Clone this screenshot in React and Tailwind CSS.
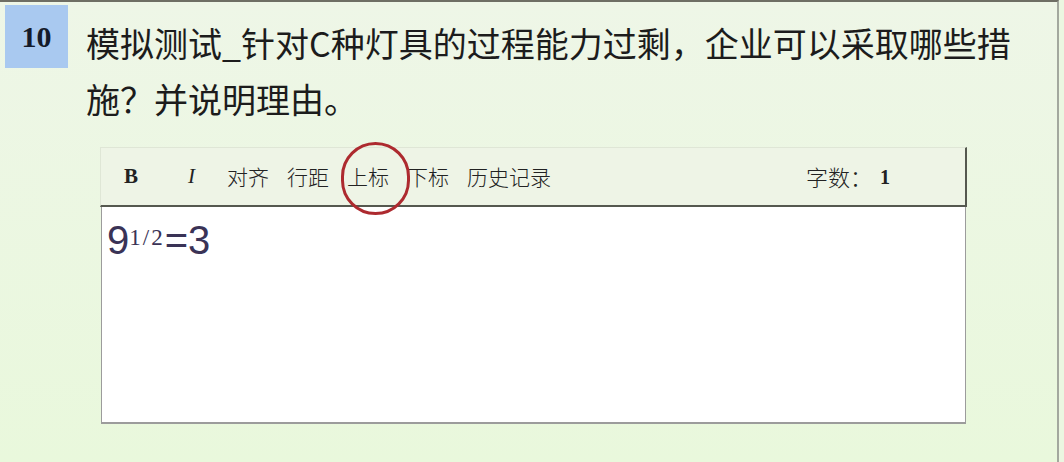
export default function App() {
  const tools = ['对齐', '行距', '上标', '下标', '历史记录'];

  return (
    <div className="w-[1064px] h-[462px] bg-[#ebf6e1] overflow-hidden">
      <div className="w-[1059px] h-[462px] border-t-2 border-t-[#6e6e64] border-r-2 border-r-[#a3a89e] bg-gradient-to-b from-[#eef6e7] to-[#e9f8dc]">
        {/* question header */}
        <div className="flex items-start">
          <div className="ml-[5px] mt-[3px] w-[63px] h-[63px] bg-[#a9c9f0] flex items-center justify-center text-[30px] font-bold text-[#141a2a]" style={{ fontFamily: '"Liberation Serif", serif' }}>
            10
          </div>
          <div className="ml-[18px] mt-[13px] text-[34px] leading-[56px] text-[#1c1c1c]" style={{ fontFamily: '"Noto Sans CJK SC", "Noto Sans", sans-serif' }}>
            模拟测试_针对C种灯具的过程能力过剩，企业可以采取哪些措
            <br />
            施？并说明理由。
          </div>
        </div>

        {/* editor */}
        <div className="relative ml-[100px] mt-[20px] w-[867px]">
          <div className="h-[60px] flex items-center bg-[#eef4e6] border-l border-t border-l-[#dfe6d6] border-t-[#dfe6d6] border-r-2 border-b-2 border-r-[#55584f] border-b-[#55584f] text-[#222]" style={{ fontFamily: '"Noto Sans CJK SC", sans-serif' }}>
            <span className="ml-[23px] text-[21px] font-bold" style={{ fontFamily: '"Liberation Serif", serif' }}>B</span>
            <span className="ml-[50px] text-[21px] italic" style={{ fontFamily: '"Liberation Serif", serif' }}>I</span>
            <div className="ml-[32px] flex gap-[18px] text-[21px] font-light">
              {tools.map((t) => (
                <span key={t}>{t}</span>
              ))}
            </div>
            <div className="ml-auto mr-[75px] flex items-center text-[22px] font-light">
              <span>字数：</span>
              <span className="ml-[8px] text-[20px] font-bold" style={{ fontFamily: '"Liberation Serif", serif' }}>1</span>
            </div>
          </div>
          <div className="h-[217px] ml-[1px] w-[865px] bg-white border-l border-r border-b-2 border-[#9c9c9c] pl-[5px] pt-[9px] text-[#3a3356]">
            <div className="text-[40px] leading-[44px]" style={{ fontFamily: '"Liberation Sans", sans-serif' }}>
              <span>9</span>
              <span className="text-[23px] align-[9px] tracking-[2px]" style={{ fontFamily: '"Liberation Serif", serif' }}>1/2</span>
              <span>=3</span>
            </div>
          </div>

          {/* red annotation circle */}
          <div className="absolute left-[241px] -top-[5px] w-[69px] h-[73px] rounded-full border-[3px] border-[#ad2a2f]" />
        </div>
      </div>
    </div>
  );
}
